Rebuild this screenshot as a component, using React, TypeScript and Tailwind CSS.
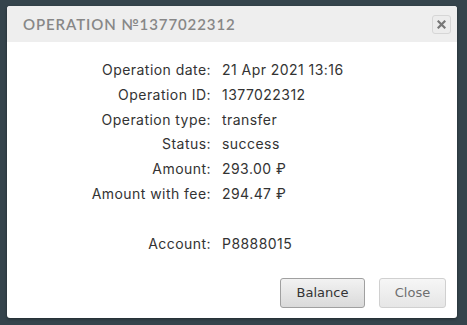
const rows: [string, string][] = [
  ["Operation date:", "21 Apr 2021 13:16"],
  ["Operation ID:", "1377022312"],
  ["Operation type:", "transfer"],
  ["Status:", "success"],
  ["Amount:", "293.00 ₽"],
  ["Amount with fee:", "294.47 ₽"],
  ["", ""],
  ["Account:", "P8888015"],
];

function App() {
  return (
    <div className="w-[467px] h-[325px] bg-[#35444c] pt-[6px] pl-[7px]">
      <div className="w-[450px] h-[312px] bg-white rounded-[3px] shadow-[0_1px_3px_rgba(0,0,0,0.4)] flex flex-col overflow-hidden">
        <div className="h-[36px] bg-[#eeeeee] flex items-center justify-between pl-[16px] pr-[6px] shrink-0">
          <span
            className="text-[15px] font-semibold tracking-[0.9px] text-[#878787] uppercase"
            style={{ fontFamily: "Lato, 'Noto Sans', sans-serif" }}
          >
            Operation №1377022312
          </span>
          <button className="w-[19px] h-[19px] rounded-[3px] border border-[#d6d6d6] bg-[#ececec] flex items-center justify-center">
            <svg width="9" height="9" viewBox="0 0 9 9">
              <path d="M1.5 1.5 L7.5 7.5 M7.5 1.5 L1.5 7.5" stroke="#777" strokeWidth="2.2" strokeLinecap="square" />
            </svg>
          </button>
        </div>
        <div
          className="grid grid-cols-[204px_1fr] gap-x-[11px] pt-[16px] text-[14px] leading-[24.8px] tracking-[0.45px] text-[#333]"
          style={{ fontFamily: "Inter, 'Noto Sans', sans-serif" }}
        >
          {rows.map(([label, value], i) => (
            <div key={i} className="contents">
              <div className="text-right h-[24.8px] whitespace-nowrap">{label}</div>
              <div className="h-[24.8px] whitespace-nowrap">{value}</div>
            </div>
          ))}
        </div>
        <div
          className="mt-auto flex justify-end gap-[14px] pr-[11px] pb-[10px]"
          style={{ fontFamily: "'DejaVu Sans', Verdana, sans-serif" }}
        >
          <button className="w-[85px] h-[30px] rounded-[3px] border border-[#a0a0a0] bg-gradient-to-b from-[#f2f2f2] to-[#dadada] text-[13px] text-[#333]">
            Balance
          </button>
          <button className="w-[67px] h-[30px] rounded-[3px] border border-[#d0d0d0] bg-gradient-to-b from-[#f6f6f6] to-[#e6e6e6] text-[13px] text-[#6f6f6f]">
            Close
          </button>
        </div>
      </div>
    </div>
  );
}

export default App;
